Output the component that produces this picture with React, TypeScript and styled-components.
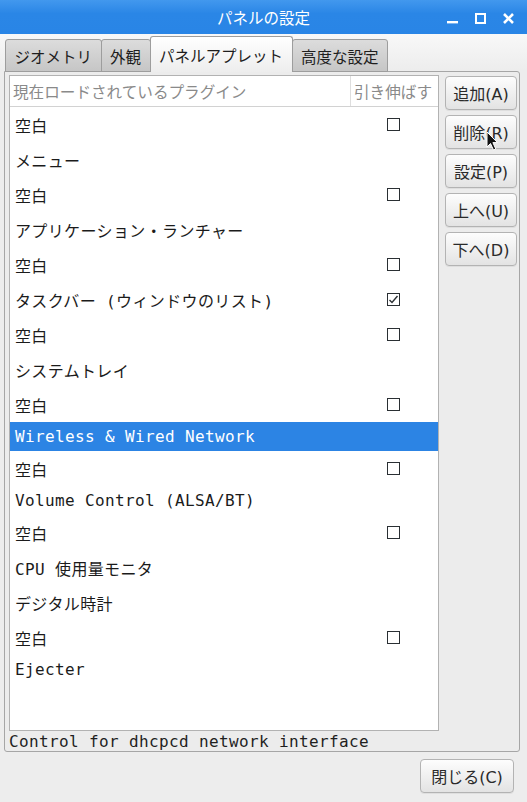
import React from "react";
import styled, { createGlobalStyle } from "styled-components";

const GlobalStyle = createGlobalStyle`
  html, body {
    margin: 0;
    padding: 0;
    background: #ededed;
  }
  body {
    font-family: "Noto Sans CJK JP", "Noto Sans", sans-serif;
  }
`;

type Plugin = { name: string; stretch?: boolean; checked?: boolean; selected?: boolean };

const plugins: Plugin[] = [
  { name: "空白", stretch: true },
  { name: "メニュー" },
  { name: "空白", stretch: true },
  { name: "アプリケーション・ランチャー" },
  { name: "空白", stretch: true },
  { name: "タスクバー (ウィンドウのリスト)", stretch: true, checked: true },
  { name: "空白", stretch: true },
  { name: "システムトレイ" },
  { name: "空白", stretch: true },
  { name: "Wireless & Wired Network", selected: true },
  { name: "空白", stretch: true },
  { name: "Volume Control (ALSA/BT)" },
  { name: "空白", stretch: true },
  { name: "CPU 使用量モニタ" },
  { name: "デジタル時計" },
  { name: "空白", stretch: true },
  { name: "Ejecter" },
];

const tabs = ["ジオメトリ", "外観", "パネルアプレット", "高度な設定"];
const actions = ["追加(A)", "削除(R)", "設定(P)", "上へ(U)", "下へ(D)"];

const Window = styled.div`
  width: 527px;
  height: 802px;
  display: flex;
  flex-direction: column;
  background: #ededed;
  overflow: hidden;
`;

const TitleBar = styled.div`
  height: 34px;
  flex-shrink: 0;
  display: grid;
  grid-template-columns: 1fr auto 1fr;
  align-items: center;
  background: linear-gradient(#4298ee, #2a86e6 40%, #2985e6);
  color: #fff;
`;

const Title = styled.div`
  grid-column: 2;
  font-size: 15.5px;
  line-height: 1;
  padding-top: 1px;
`;

const Controls = styled.div`
  grid-column: 3;
  justify-self: end;
  display: flex;
  align-items: center;
  gap: 17px;
  padding-right: 13px;
  padding-top: 2px;
`;

const Content = styled.div`
  flex: 1;
  display: flex;
  flex-direction: column;
  padding: 2px 7px 0 4px;
  background: linear-gradient(#f8f8f8 0, #ededed 36px);
`;

const TabBar = styled.div`
  display: flex;
  align-items: flex-end;
  height: 36px;
  margin-bottom: -1px;
  position: relative;
  z-index: 1;
`;

const Tab = styled.div<{ $active?: boolean }>`
  height: ${(p) => (p.$active ? 36 : 33)}px;
  box-sizing: border-box;
  padding: 0 8.5px;
  margin-left: -1px;
  &:first-child {
    margin-left: 1px;
  }
  display: flex;
  align-items: center;
  font-size: 15.5px;
  color: #1e1e1e;
  border: 1px solid #9d9d9d;
  border-bottom: ${(p) => (p.$active ? "none" : "1px solid #9d9d9d")};
  border-radius: 3px 3px 0 0;
  background: ${(p) =>
    p.$active
      ? "linear-gradient(#ffffff, #ededed)"
      : "linear-gradient(#dcdcdc, #c6c6c6)"};
`;

const Panel = styled.div`
  height: 681px;
  box-sizing: border-box;
  border: 1px solid #a6a6a6;
  border-radius: 0 3px 3px 3px;
  background: #ececec;
  padding: 3px 2px 0 4px;
  display: grid;
  grid-template-columns: 430px 72px;
  grid-template-rows: 656px auto;
  column-gap: 6px;
`;

const List = styled.div`
  box-sizing: border-box;
  border: 1px solid #b2b2b2;
  background: #fff;
  overflow: hidden;
`;

const HeaderRow = styled.div`
  display: grid;
  grid-template-columns: 1fr 88px;
  height: 30px;
  border-bottom: 1px solid #d2d2d2;
  color: #8a8a8a;
  font-size: 15.6px;
`;

const HeaderCell = styled.div<{ $divider?: boolean }>`
  display: flex;
  align-items: center;
  padding-left: 3px;
  padding-bottom: 1px;
  white-space: nowrap;
  border-left: ${(p) => (p.$divider ? "1px solid #dedede" : "none")};
`;

const Row = styled.div<{ $tall: boolean; $selected?: boolean }>`
  display: grid;
  grid-template-columns: 1fr 88px;
  align-items: center;
  height: ${(p) => (p.$tall ? 35 : 29)}px;
  padding-left: 5px;
  font-family: "DejaVu Sans Mono", "Noto Sans CJK JP", monospace;
  font-size: 16px;
  letter-spacing: 0.37px;
  white-space: nowrap;
  color: ${(p) => (p.$selected ? "#ffffff" : "#1b1b1b")};
  background: ${(p) => (p.$selected ? "#2c84e4" : "transparent")};
`;

const CheckCell = styled.div`
  display: flex;
  justify-content: center;
  padding-right: 1px;
`;

const Box = styled.div`
  width: 13px;
  height: 13px;
  box-sizing: border-box;
  border: 1px solid #2a2f33;
  background: #fff;
  display: flex;
  align-items: center;
  justify-content: center;
`;

const ButtonColumn = styled.div`
  display: flex;
  flex-direction: column;
  gap: 5px;
  padding-top: 1px;
`;

const Button = styled.div<{ $width?: number }>`
  position: relative;
  width: ${(p) => p.$width ?? 72}px;
  height: 34px;
  box-sizing: border-box;
  border: 1px solid #b3b3b3;
  border-radius: 4px;
  background: linear-gradient(#fdfdfd, #e3e3e3);
  box-shadow: 0 1px 0 rgba(0, 0, 0, 0.06);
  display: flex;
  align-items: center;
  justify-content: center;
  font-family: "DejaVu Sans", "Noto Sans CJK JP", sans-serif;
  font-size: 16px;
  color: #2a2a2a;
  white-space: nowrap;
`;

const Status = styled.div`
  grid-column: 1 / -1;
  height: 20px;
  display: flex;
  align-items: center;
  font-family: "DejaVu Sans Mono", monospace;
  font-size: 16px;
  letter-spacing: 0.37px;
  color: #1f1f1f;
  white-space: nowrap;
`;

const Footer = styled.div`
  display: flex;
  justify-content: flex-end;
  padding: 7px 6px 0 0;
`;

const Cursor = styled.svg`
  position: absolute;
  left: 40px;
  top: 15px;
`;

const hasWide = (s: string) => /[^\x00-\x7f]/.test(s);

const CheckBox = ({ checked }: { checked?: boolean }) => (
  <Box>
    {checked && (
      <svg width="11" height="11" viewBox="0 0 11 11">
        <polyline points="1.5,6 4,8.5 9.5,2" fill="none" stroke="#2a2f33" strokeWidth="1.4" />
      </svg>
    )}
  </Box>
);

export default function App() {
  return (
    <Window>
      <GlobalStyle />
      <TitleBar>
        <Title>パネルの設定</Title>
        <Controls>
          <svg width="11" height="11" viewBox="0 0 11 11">
            <rect x="0" y="8" width="11" height="2.4" fill="#fff" />
          </svg>
          <svg width="11" height="11" viewBox="0 0 11 11">
            <rect x="1" y="1" width="9" height="9" fill="none" stroke="#fff" strokeWidth="2" />
          </svg>
          <svg width="11" height="11" viewBox="0 0 11 11">
            <path d="M1 1 L10 10 M10 1 L1 10" stroke="#fff" strokeWidth="2.6" />
          </svg>
        </Controls>
      </TitleBar>
      <Content>
        <TabBar>
          {tabs.map((t, i) => (
            <Tab key={t} $active={i === 2}>
              {t}
            </Tab>
          ))}
        </TabBar>
        <Panel>
          <List>
            <HeaderRow>
              <HeaderCell>現在ロードされているプラグイン</HeaderCell>
              <HeaderCell $divider>引き伸ばす</HeaderCell>
            </HeaderRow>
            {plugins.map((p, i) => (
              <Row key={i} $tall={hasWide(p.name)} $selected={p.selected}>
                <span>{p.name}</span>
                <CheckCell>{p.stretch && <CheckBox checked={p.checked} />}</CheckCell>
              </Row>
            ))}
          </List>
          <ButtonColumn>
            {actions.map((a, i) => (
              <Button key={a}>
                {a}
                {i === 1 && (
                  <Cursor width="13" height="20" viewBox="0 0 13 20">
                    <path
                      d="M1 1 L1 16 L4.5 12.5 L7.5 19 L9.8 18 L6.9 11.6 L11.5 11.6 Z"
                      fill="#111"
                      stroke="#fff"
                      strokeWidth="1"
                    />
                  </Cursor>
                )}
              </Button>
            ))}
          </ButtonColumn>
          <Status>Control for dhcpcd network interface</Status>
        </Panel>
        <Footer>
          <Button $width={94}>閉じる(C)</Button>
        </Footer>
      </Content>
    </Window>
  );
}
